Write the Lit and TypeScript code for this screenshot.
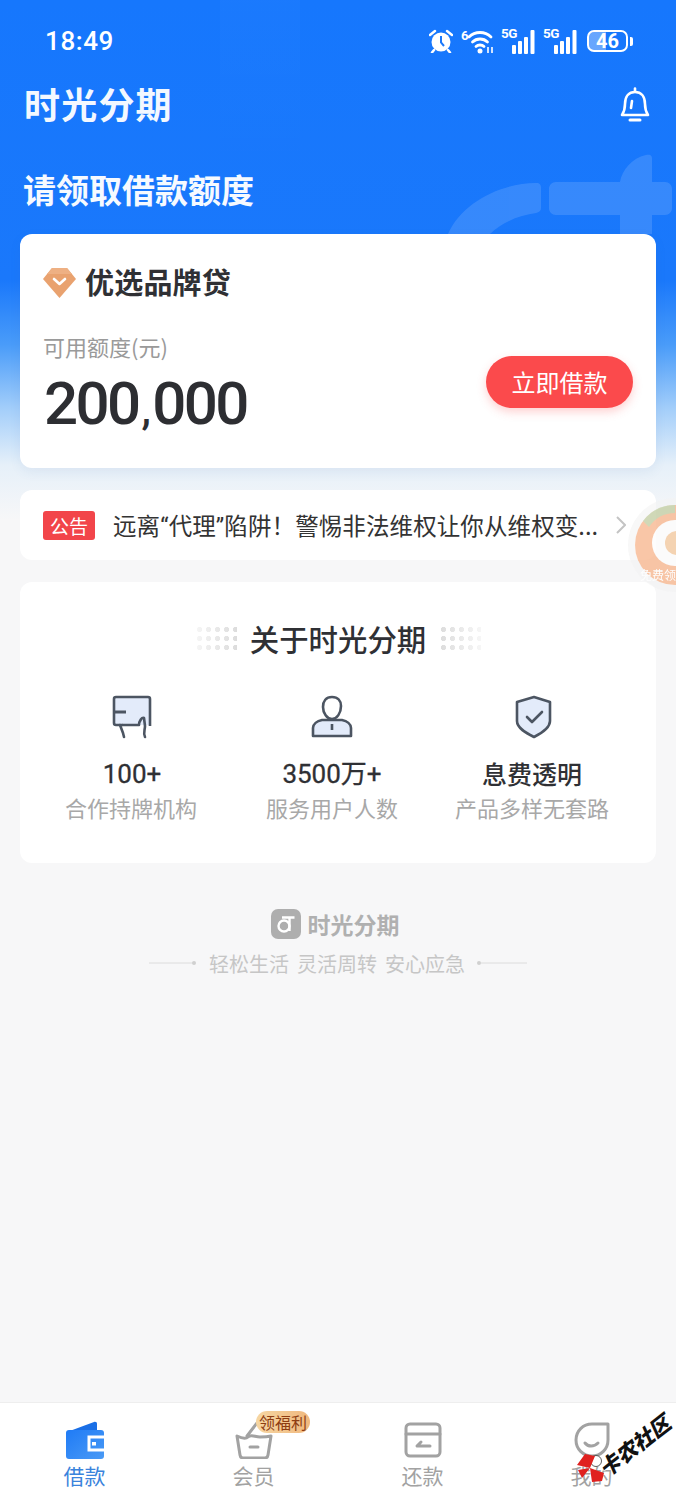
import { LitElement, html, css, svg } from "lit";
import { customElement } from "lit/decorators.js";

const signal = () => html`<span class="sig"><span class="g5">5G</span><svg width="26" height="25" viewBox="0 0 26 25"><g fill="#fff"><rect x="0" y="16" width="4" height="9" rx="1"/><rect x="6" y="12" width="4" height="13" rx="1"/><rect x="12" y="8" width="4" height="17" rx="1"/><rect x="18.500" y="1" width="4" height="24" rx="1"/></g></svg></span>`;

const stats = [
  { icon: svg`<path d="M4 3h35v27H4z" fill="#e3ebfa"/><path d="M13 30H6a2 2 0 0 1-2-2V4a2 2 0 0 1 2-2h32a2 2 0 0 1 2 2v27" fill="none" stroke="#4c5562" stroke-width="2.600"/><path d="M4 17h12" stroke="#4c5562" stroke-width="3"/><path d="M10 30l3 8 1 4M35 42c-2-4 0-7 0-11l-1-8c-2-1-5 3-5 7H13" fill="none" stroke="#4c5562" stroke-width="2.600" stroke-linecap="round" stroke-linejoin="round"/>`, value: "100+", label: "合作持牌机构", strong: false },
  { icon: svg`<path d="M3 41V33c0-4 4-7 9-8l10 0 10 0c5 1 9 4 9 8v8z" fill="#e3ebfa" stroke="#4c5562" stroke-width="2.600" stroke-linejoin="round"/><path d="M13 12c0-6 3-10 9-10s9 4 9 9c0 7-4 13-9 13s-9-6-9-12z" fill="#fff" stroke="#4c5562" stroke-width="2.600"/><path d="M22 29v6" stroke="#4c5562" stroke-width="2.600"/>`, value: "3500万+", label: "服务用户人数", strong: false },
  { icon: svg`<path d="M24 2l16 5v19c0 7-8 12-16 16C16 38 7 33 7 26V7z" fill="#e3ebfa" stroke="#4c5562" stroke-width="2.600" stroke-linejoin="round"/><path d="M17 22l5 5 10-10" fill="none" stroke="#4c5562" stroke-width="2.600" stroke-linecap="round" stroke-linejoin="round"/>`, value: "息费透明", label: "产品多样无套路", strong: true },
];

@customElement("app-root")
export class AppRoot extends LitElement {
  static styles = css`
    :host {
      display: block;
      width: 676px;
      height: 1500px;
      font-family: "Noto Sans CJK SC", Roboto, sans-serif;
    }
    .page {
      position: relative;
      width: 676px;
      height: 1500px;
      overflow: hidden;
      display: flex;
      flex-direction: column;
      background: linear-gradient(180deg, #1677fd 0, #1a78fb 280px, #4a9cf9 345px, #a5cffa 410px, #e6f0f9 465px, #f7f7f8 520px, #f7f7f8 100%);
    }
    .band {
      position: absolute; left: 220px; top: 0; width: 80px; height: 170px;
      background: linear-gradient(180deg, rgba(255,255,255,.018), rgba(255,255,255,0));
    }
    .deco { position: absolute; left: 440px; top: 150px; }
    .status {
      position: relative;
      height: 82px;
      display: flex;
      align-items: center;
      justify-content: space-between;
      padding: 0 43px 0 45px;
      color: #fff;
    }
    .time { font: 500 26px/1 Roboto, sans-serif; letter-spacing: .6px; }
    .sysicons { display: flex; align-items: center; gap: 7px; }
    .wifi { overflow: visible; }
    .sig { position: relative; display: block; width: 35px; height: 26px; }
    .sig svg { position: absolute; right: -2px; bottom: 0; }
    .g5 { position: absolute; left: 0; top: -2px; font: 700 13.500px/15px Roboto, sans-serif; color: #fff; letter-spacing: -.5px; }
    .batt { display: flex; align-items: center; gap: 2px; margin-left: 2px; }
    .batt-body {
      width: 41px; height: 22px; box-sizing: border-box;
      border: 2px solid #fff; border-radius: 7px;
      background: linear-gradient(90deg, rgba(255,255,255,.35) 46%, transparent 46%);
      font: 700 20px/18px Roboto, sans-serif; text-align: center; color: #fff;
    }
    .batt-tip { width: 3px; height: 9px; background: #fff; border-radius: 0 2px 2px 0; }
    .head {
      position: relative;
      height: 46px;
      display: flex; align-items: center; justify-content: space-between;
      padding: 0 25px 0 24px;
    }
    .logo { font-size: 36px; font-weight: 700; line-height: 42px; padding-bottom: 4px; color: #f3f8ff; letter-spacing: 1.200px; }
    .title {
      position: relative;
      margin: 39px 0 0 23px;
      font-size: 33px; font-weight: 700; line-height: 44px; color: #f6faff;
    }
    .card { position: relative; margin: 22px 20px 0; background: #fff; border-radius: 12px; }
    .title + .card { margin-top: 23px; }
    .main { height: 234px; box-sizing: border-box; padding: 33px 23px 0; box-shadow: 0 4px 12px rgba(60,100,160,.08); }
    .prod { display: flex; align-items: center; gap: 9px; height: 32px; font-size: 29px; font-weight: 700; color: #2f3034; }
    .prod span { padding-bottom: 4px; line-height: 32px; letter-spacing: .2px; }
    .row { margin-top: 32px; display: flex; align-items: center; justify-content: space-between; }
    .lab { font-size: 22px; line-height: 30px; color: #9a9a9a; }
    .num { margin: 17px 0 0 1px; font: 500 60px/52px Roboto, sans-serif; color: #2d2e32; letter-spacing: -2.600px; white-space: nowrap; }
    .comma { font-size: 42px; margin: 0 4px 0 3px; }
    .cta {
      width: 147px; height: 52px; border-radius: 26px; margin-bottom: 4px;
      background: #fb4a4c; color: #fff;
      display: flex; align-items: center; justify-content: center;
      font-size: 24px; box-shadow: 0 4px 10px rgba(251,74,76,.25);
    }
    .notice {
      height: 70px; box-sizing: border-box; padding: 0 30px 0 23px;
      display: flex; align-items: center; gap: 18px;
    }
    .tag {
      flex: none; width: 52px; height: 29px; border-radius: 3px; background: #f2454a; color: #fff;
      font-size: 19px; line-height: 29px; text-align: center;
    }
    .ntext { flex: 1; min-width: 0; font-size: 23.500px; color: #333; white-space: nowrap; letter-spacing: .1px; }
    .q { font-family: Roboto, sans-serif; }
    .about { height: 281px; box-sizing: border-box; padding: 39px 12px 0; }
    .ahead { display: flex; align-items: center; justify-content: center; gap: 13px; height: 34px; font-size: 29.400px; color: #2f3034; font-weight: 500; }
    .dots {
      width: 42px; height: 27px;
      background: radial-gradient(circle, #dcdcdc 2.400px, transparent 2.900px) 0 0 / 9px 9px;
    }
    .dots.l { -webkit-mask-image: linear-gradient(90deg, rgba(0,0,0,.25), #000); mask-image: linear-gradient(90deg, rgba(0,0,0,.25), #000); }
    .dots.r { -webkit-mask-image: linear-gradient(90deg, #000, rgba(0,0,0,.25)); mask-image: linear-gradient(90deg, #000, rgba(0,0,0,.25)); }
    .stats { margin-top: 40px; display: grid; grid-template-columns: repeat(3, 200px); }
    .stat { display: flex; flex-direction: column; align-items: center; }
    .val { margin-top: 19px; font: 400 26px/32px Roboto, "Noto Sans CJK SC", sans-serif; color: #2f3034; -webkit-text-stroke: .3px #2f3034; }
    .val.strong { font-family: "Noto Sans CJK SC", sans-serif; font-size: 25px; font-weight: 500; -webkit-text-stroke: 0; line-height: 30px; }
    .desc { margin-top: 2px; font-size: 22px; line-height: 30px; color: #a8a8a8; white-space: nowrap; }
    .val.strong + .desc { margin-top: 4px; }
    .stat:first-child .desc { transform: translateX(-1px); }
    .brand { margin-top: 46px; display: flex; align-items: center; justify-content: center; gap: 7px; height: 30px; font-size: 23px; font-weight: 700; color: #b0b0b0; padding-right: 6px; }
    .slogan { margin-top: 10px; display: flex; align-items: center; justify-content: center; gap: 12px; height: 28px; font-size: 20px; color: #c6c6c6; white-space: pre; word-spacing: 3.500px; }
    .tabs {
      position: relative;
      margin-top: auto; height: 98px; box-sizing: border-box; background: #fff; border-top: 1px solid #eeeeee;
      display: grid; grid-template-columns: repeat(4, 169px);
    }
    .tab { position: relative; display: flex; flex-direction: column; align-items: center; padding-top: 18px; font-size: 21px; color: #a2a2a2; }
    .tab svg { display: block; }
    .tab .t { margin-top: 2px; line-height: 28px; }
    .tab.on { color: #3a83dc; }
    .badge {
      position: absolute; left: 87px; top: 8px; width: 54px; height: 22px; border-radius: 11px;
      background: linear-gradient(90deg, #f6d6a2, #f0b87e); color: #8e3d12;
      font-size: 16px; line-height: 22px; text-align: center;
    }
    .ball { position: absolute; left: 627px; top: 497px; opacity: .75; }
    .mark { position: absolute; left: 572px; top: 1405px; }
    .bow { position: absolute; left: 0; top: 0; }
    .mark-text {
      position: absolute; left: 20px; top: 27px;
      font-size: 21px; font-weight: 900; font-style: italic; color: #111; white-space: nowrap;
      line-height: 26px;
      transform: rotate(-38deg);
      text-shadow: -1px 0 #fff, 1px 0 #fff, 0 -1px #fff, 0 1px #fff;
    }
  `;

  render() {
    return html`<div class="page">
      <div class="band"></div>
      <svg class="deco" width="236" height="84" viewBox="0 0 236 84" fill="#fff">
        <g opacity=".13">
          <path d="M8 84C22 52 62 33 96 33c4 0 5 2 5 5v20c0 3-2 4-5 5C80 65 62 72 50 84z"/>
          <path d="M116 32h64c2-12 12-24 26-27 5-1 6 1 6 4v23h13c4 0 7 3 7 7v19c0 4-3 7-7 7h-13v19h-32V65h-64c-4 0-7-3-7-7V39c0-4 3-7 7-7z"/>
        </g>
      </svg>

      <div class="status">
        <span class="time">18:49</span>
        <div class="sysicons">
          <svg width="24" height="24" viewBox="0 0 24 24"><circle cx="12" cy="13" r="9.500" fill="#fff"/><path d="M12 7v6.500l3 3.500" fill="none" stroke="#1a78fb" stroke-width="2"/><path d="M1 6l5-4M23 6l-5-4M5 21l-2 2.500M19 21l2 2.500" stroke="#fff" stroke-width="2.500" stroke-linecap="round"/></svg>
          <svg class="wifi" width="34" height="26" viewBox="0 0 34 26" fill="none"><text x="1" y="12" font-size="13" font-weight="700" font-family="Roboto" fill="#fff">6</text><path d="M9 9c6-6 16-6 22 0M12.500 14c4-4 11-4 15 0M16 18.500c2-2 6-2 8 0" stroke="#fff" stroke-width="2.800" stroke-linecap="round"/><circle cx="20" cy="23" r="2.500" fill="#fff"/><path d="M28 19v6M32 19v6" stroke="#fff" stroke-width="1.600"/></svg>
          ${signal()} ${signal()}
          <div class="batt"><div class="batt-body">46</div><div class="batt-tip"></div></div>
        </div>
      </div>

      <div class="head">
        <span class="logo">时光分期</span>
        <svg width="32" height="36" viewBox="0 0 32 36" fill="none" stroke="#fff" stroke-width="2.600" stroke-linejoin="round" stroke-linecap="round"><path d="M16 1.500v3"/><path d="M3 28c2-3 3-5 3-11 0-8 4-12 10-12s10 4 10 12c0 6 1 8 3 11z"/><path d="M13 14l-1 7"/><path d="M11 33h10" stroke-width="3"/></svg>
      </div>

      <div class="title">请领取借款额度</div>

      <div class="card main">
        <div class="prod">
          <svg width="33" height="32" viewBox="0 0 33 32"><path d="M9 1h15l9 11-16.500 19L0 12z" fill="#e9a26f"/><path d="M9 1h15l5 6H4z" fill="#eeb083"/><path d="M11 12l5.500 5 5.500-5" fill="none" stroke="#fff" stroke-width="2.600" stroke-linecap="round" stroke-linejoin="round"/></svg>
          <span>优选品牌贷</span>
        </div>
        <div class="row">
          <div>
            <div class="lab">可用额度(元)</div>
            <div class="num">200<span class="comma">,</span>000</div>
          </div>
          <div class="cta">立即借款</div>
        </div>
      </div>

      <div class="card notice">
        <span class="tag">公告</span>
        <span class="ntext">远离<span class="q">“</span>代理<span class="q">”</span>陷阱！警惕非法维权让你从维权变...</span>
        <svg width="10" height="18" viewBox="0 0 10 18" fill="none" stroke="#c4c4c4" stroke-width="2"><path d="M1 1l8 8-8 8"/></svg>
      </div>

      <div class="card about">
        <div class="ahead"><div class="dots l"></div><span>关于时光分期</span><div class="dots r"></div></div>
        <div class="stats">
          ${stats.map(
            (s) => html`<div class="stat">
              <svg width="44" height="44" viewBox="0 0 44 44">${s.icon}</svg>
              <div class="val ${s.strong ? "strong" : ""}">${s.value}</div>
              <div class="desc">${s.label}</div>
            </div>`
          )}
        </div>
      </div>

      <div class="brand">
        <svg width="30" height="30" viewBox="0 0 30 30"><rect width="30" height="30" rx="7" fill="#aeaeae"/><circle cx="13" cy="17" r="5.500" fill="none" stroke="#fff" stroke-width="2.400"/><path d="M18.500 22V8M11 8.500h12.500" stroke="#fff" stroke-width="2.400" fill="none"/></svg>
        <span>时光分期</span>
      </div>
      <div class="slogan">
        <svg width="48" height="6" viewBox="0 0 48 6"><path d="M0 3h44" stroke="#dcdcdc"/><circle cx="45" cy="3" r="2" fill="#d0d0d0"/></svg>
        <span>轻松生活 灵活周转 安心应急</span>
        <svg width="50" height="6" viewBox="0 0 50 6"><circle cx="2" cy="3" r="2" fill="#d0d0d0"/><path d="M4 3h46" stroke="#dcdcdc"/></svg>
      </div>

      <div class="tabs">
        <div class="tab on">
          <svg width="38" height="38" viewBox="0 0 38 38"><defs><linearGradient id="w" x1="0" x2="1" y1="0" y2="1"><stop offset="0" stop-color="#1f7bf6"/><stop offset="1" stop-color="#4a9af5"/></linearGradient></defs><path d="M1 11L28 1c2-.500 3 .500 3 2v8z" fill="#1a6fe6"/><rect x="0" y="9" width="38" height="29" rx="3" fill="url(#w)"/><path d="M38 16H23v13h15" fill="none" stroke="#fff" stroke-width="3"/><rect x="26" y="21" width="4" height="3.500" fill="#fff"/></svg>
          <span class="t">借款</span>
        </div>
        <div class="tab">
          <svg width="38" height="38" viewBox="0 0 38 38" fill="none" stroke="#a2a2a2" stroke-width="3" stroke-linecap="round" stroke-linejoin="round"><path d="M2 15l3 19c.300 2 1.500 3 3 3h22c1.500 0 2.700-1 3-3l3-19c-4 1-7 1-11 1-5 0-9-3-12 0-2 2-5 2-11-1zM12 15L22 2"/><path d="M15 26h8"/></svg>
          <span class="t">会员</span>
          <span class="badge">领福利</span>
        </div>
        <div class="tab">
          <svg width="38" height="38" viewBox="0 0 38 38" fill="none" stroke="#a2a2a2" stroke-width="3" stroke-linecap="round" stroke-linejoin="round"><rect x="2" y="3" width="34" height="32" rx="4"/><path d="M2 13h34"/><path d="M14 25h12M17 21l-4 4"/></svg>
          <span class="t">还款</span>
        </div>
        <div class="tab">
          <svg width="38" height="38" viewBox="0 0 38 38" fill="none" stroke="#a2a2a2" stroke-width="3" stroke-linecap="round" stroke-linejoin="round"><path d="M35 3v16c0 9-7 16-16 16S3 28 3 19 10 3 19 3z"/><path d="M12 22c3 4 9 4 13 0"/></svg>
          <span class="t">我的</span>
        </div>
      </div>

      <svg class="ball" width="49" height="96" viewBox="0 0 49 96">
        <circle cx="48" cy="48" r="47" fill="#f3f3f3" opacity=".8"/>
        <circle cx="48" cy="48" r="40" fill="#f8b48a"/>
        <path d="M16 24a40 40 0 0 1 32-16v8a32 32 0 0 0-26 14z" fill="#a9d6a8" opacity=".7"/>
        <circle cx="48" cy="46" r="23" fill="#fdfdfd"/>
        <circle cx="50" cy="46" r="12" fill="#f3c79b"/>
        <text x="13" y="83" font-size="12" fill="#fff" font-family="Noto Sans CJK SC">免费领</text>
      </svg>

      <div class="mark">
        <svg class="bow" width="48" height="80" viewBox="0 0 48 80">
          <circle cx="24" cy="56" r="5.500" fill="#fff" stroke="#333" stroke-width=".8"/>
          <path d="M18 63L5 60 13 49 23 51zM18 63L32 68 30 76 20 77zM18 63L6 65 10 73z" fill="#e0211f"/>
        </svg>
        <div class="mark-text">卡农社区</div>
      </div>
    </div>`;
  }
}
